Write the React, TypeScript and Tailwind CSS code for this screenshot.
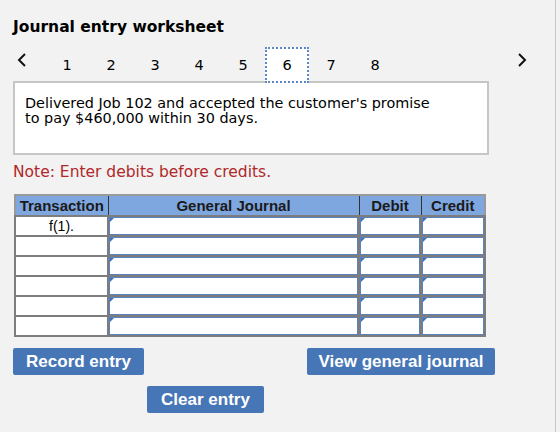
import React from "react";

const tabs = [1, 2, 3, 4, 5, 6, 7, 8];
const active = 6;

const Chevron = ({ dir }: { dir: "left" | "right" }) => (
  <svg width="10" height="14" viewBox="0 0 10 14" className="block">
    <polyline
      points={dir === "left" ? "8,1 2,7 8,13" : "2,1 8,7 2,13"}
      fill="none"
      stroke="#111"
      strokeWidth="2"
    />
  </svg>
);

// input cell with the little blue marker in the corner
const EntryCell = () => (
  <div className="relative h-full border border-[#5b82bd] bg-white">
    <div className="absolute left-0 top-0 w-0 h-0 border-t-[4px] border-r-[4px] border-t-[#3c72c4] border-r-transparent" />
  </div>
);

export default function App() {
  const rows = ["f(1).", "", "", "", "", ""];

  return (
    <div className="w-[560px] h-[432px] bg-[#f2f2f2] font-['DejaVu_Sans',sans-serif] text-black">
      <div className="w-[556px] h-full border-r border-[#c9c9c9] pl-[13px] pt-[17px]">
        <h1 className="text-[15.5px] font-bold leading-[20px]">Journal entry worksheet</h1>

        {/* step tabs */}
        <div className="relative z-10 mt-[10px] flex items-center h-[36px]">
          <div className="w-[32px] pl-[4px] -mt-[10px]">
            <Chevron dir="left" />
          </div>
          {tabs.map((t) => (
            <div
              key={t}
              className={
                t === active
                  ? "w-[44px] h-[36px] flex items-center justify-center pt-[2px] text-[14.5px] bg-white border-2 border-dotted border-[#5d86c6]"
                  : "w-[44px] h-[36px] flex items-center justify-center pt-[2px] text-[14.5px]"
              }
            >
              {t}
            </div>
          ))}
          <div className="ml-auto mr-[28px] -mt-[10px]">
            <Chevron dir="right" />
          </div>
        </div>

        <div className="-mt-[2px] w-[476px] h-[74px] border-2 border-[#c6c6c6] bg-white px-[10px] pt-[13px] text-[14.4px] leading-[15px]">
          Delivered Job 102 and accepted the customer's promise
          <br />
          to pay $460,000 within 30 days.
        </div>

        <p className="mt-[8px] text-[15.5px] leading-[18px] text-[#b0282a]">
          Note: Enter debits before credits.
        </p>

        <table className="mt-[13px] ml-[1px] w-[470px] table-fixed border-collapse border-2 border-[#9a9a9a] font-['Liberation_Sans',sans-serif]">
          <colgroup>
            <col className="w-[93px]" />
            <col className="w-[251px]" />
            <col className="w-[62px]" />
            <col className="w-[64px]" />
          </colgroup>
          <thead>
            <tr className="h-[21px] bg-[#7fa7df] text-[15px] font-bold text-[#1a1a1a]">
              <th className="border border-[#333] p-0 leading-[18px]">Transaction</th>
              <th className="border border-[#333] p-0 leading-[18px]">General Journal</th>
              <th className="border border-[#333] p-0 leading-[18px]">Debit</th>
              <th className="border border-[#333] p-0 leading-[18px]">Credit</th>
            </tr>
          </thead>
          <tbody>
            {rows.map((r, i) => (
              <tr key={i} className="h-[20px]">
                <td className="border-2 border-[#7d7d7d] bg-white p-0 text-center text-[14px] leading-[15px]">
                  {r}
                </td>
                <td className="border-2 border-[#7d7d7d] p-0 h-[20px]">
                  <EntryCell />
                </td>
                <td className="border-2 border-[#7d7d7d] p-0 h-[20px]">
                  <EntryCell />
                </td>
                <td className="border-2 border-[#7d7d7d] p-0 h-[20px]">
                  <EntryCell />
                </td>
              </tr>
            ))}
          </tbody>
        </table>

        <div className="mt-[11px] w-[482px] flex justify-between font-['Liberation_Sans',sans-serif]">
          <button className="w-[131px] h-[27px] rounded-[2px] bg-[#4776b6] text-white text-[17px] font-bold">
            Record entry
          </button>
          <button className="w-[188px] h-[27px] rounded-[2px] bg-[#4776b6] text-white text-[17px] font-bold">
            View general journal
          </button>
        </div>
        <div className="mt-[11px] ml-[134px] font-['Liberation_Sans',sans-serif]">
          <button className="w-[117px] h-[27px] rounded-[2px] bg-[#4776b6] text-white text-[17px] font-bold">
            Clear entry
          </button>
        </div>
      </div>
    </div>
  );
}
